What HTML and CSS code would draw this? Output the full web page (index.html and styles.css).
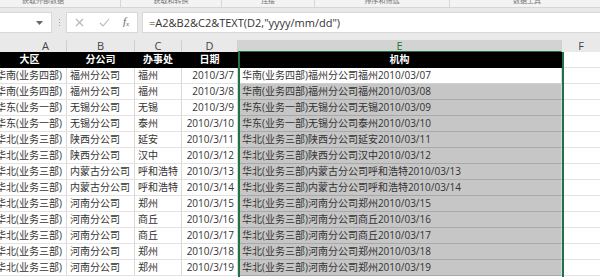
FILE: index.html
```html
<!DOCTYPE html>
<html lang="zh-CN">
<head>
<meta charset="utf-8">
<link rel="stylesheet" href="styles.css">
</head>
<body>
<div class="app">
  <div class="ribbon">
    <div class="grp g1"><span class="lbl">获取外部数据</span></div>
    <div class="grp g2"><span class="lbl">获取和转换</span></div>
    <div class="grp g3"><span class="lbl">连接</span></div>
    <div class="grp g4"><span class="lbl">排序和筛选</span></div>
    <div class="grp g5"><span class="lbl">数据工具</span></div>
  </div>
  <div class="fbar">
    <div class="namebox">
      <svg class="dd" width="7" height="4" viewBox="0 0 7 4"><path d="M0 0h7L3.5 4z" fill="#666"/></svg>
    </div>
    <div class="dots"><i></i><i></i><i></i></div>
    <div class="funcs">
      <svg width="9" height="9" viewBox="0 0 9 9"><path d="M1 1l7 7M8 1L1 8" stroke="#b5b5b5" stroke-width="1.1" fill="none"/></svg>
      <svg width="11" height="9" viewBox="0 0 11 9"><path d="M1 5l3 3 6-7" stroke="#b5b5b5" stroke-width="1.1" fill="none"/></svg>
      <span class="fx">f<sub>x</sub></span>
    </div>
    <div class="formula">=A2&amp;B2&amp;C2&amp;TEXT(D2,"yyyy/mm/dd")</div>
  </div>
  <div class="sheet">
    <div class="colhdr">
      <div class="ch cha">A</div>
      <div class="ch">B</div>
      <div class="ch">C</div>
      <div class="ch">D</div>
      <div class="ch che">E</div>
      <div class="ch chf">F</div>
    </div>
    <div class="row head">
      <div class="c ca">大区</div>
      <div class="c">分公司</div>
      <div class="c">办事处</div>
      <div class="c">日期</div>
      <div class="c">机构</div>
      <div class="c cf"></div>
    </div>
    <div class="row"><div class="c ca">华南(业务四部)</div><div class="c">福州分公司</div><div class="c">福州</div><div class="c cd">2010/3/7</div><div class="c ce active">华南(业务四部)福州分公司福州2010/03/07</div><div class="c cf"></div></div>
    <div class="row"><div class="c ca">华南(业务四部)</div><div class="c">福州分公司</div><div class="c">福州</div><div class="c cd">2010/3/8</div><div class="c ce">华南(业务四部)福州分公司福州2010/03/08</div><div class="c cf"></div></div>
    <div class="row"><div class="c ca">华东(业务一部)</div><div class="c">无锡分公司</div><div class="c">无锡</div><div class="c cd">2010/3/9</div><div class="c ce">华东(业务一部)无锡分公司无锡2010/03/09</div><div class="c cf"></div></div>
    <div class="row"><div class="c ca">华东(业务一部)</div><div class="c">无锡分公司</div><div class="c">泰州</div><div class="c cd">2010/3/10</div><div class="c ce">华东(业务一部)无锡分公司泰州2010/03/10</div><div class="c cf"></div></div>
    <div class="row"><div class="c ca">华北(业务三部)</div><div class="c">陕西分公司</div><div class="c">延安</div><div class="c cd">2010/3/11</div><div class="c ce">华北(业务三部)陕西分公司延安2010/03/11</div><div class="c cf"></div></div>
    <div class="row"><div class="c ca">华北(业务三部)</div><div class="c">陕西分公司</div><div class="c">汉中</div><div class="c cd">2010/3/12</div><div class="c ce">华北(业务三部)陕西分公司汉中2010/03/12</div><div class="c cf"></div></div>
    <div class="row"><div class="c ca">华北(业务三部)</div><div class="c">内蒙古分公司</div><div class="c">呼和浩特</div><div class="c cd">2010/3/13</div><div class="c ce">华北(业务三部)内蒙古分公司呼和浩特2010/03/13</div><div class="c cf"></div></div>
    <div class="row"><div class="c ca">华北(业务三部)</div><div class="c">内蒙古分公司</div><div class="c">呼和浩特</div><div class="c cd">2010/3/14</div><div class="c ce">华北(业务三部)内蒙古分公司呼和浩特2010/03/14</div><div class="c cf"></div></div>
    <div class="row"><div class="c ca">华北(业务三部)</div><div class="c">河南分公司</div><div class="c">郑州</div><div class="c cd">2010/3/15</div><div class="c ce">华北(业务三部)河南分公司郑州2010/03/15</div><div class="c cf"></div></div>
    <div class="row"><div class="c ca">华北(业务三部)</div><div class="c">河南分公司</div><div class="c">商丘</div><div class="c cd">2010/3/16</div><div class="c ce">华北(业务三部)河南分公司商丘2010/03/16</div><div class="c cf"></div></div>
    <div class="row"><div class="c ca">华北(业务三部)</div><div class="c">河南分公司</div><div class="c">商丘</div><div class="c cd">2010/3/17</div><div class="c ce">华北(业务三部)河南分公司商丘2010/03/17</div><div class="c cf"></div></div>
    <div class="row"><div class="c ca">华北(业务三部)</div><div class="c">河南分公司</div><div class="c">郑州</div><div class="c cd">2010/3/18</div><div class="c ce">华北(业务三部)河南分公司郑州2010/03/18</div><div class="c cf"></div></div>
    <div class="row"><div class="c ca">华北(业务三部)</div><div class="c">河南分公司</div><div class="c">郑州</div><div class="c cd">2010/3/19</div><div class="c ce">华北(业务三部)河南分公司郑州2010/03/19</div><div class="c cf"></div></div>
    <div class="selection"></div>
  </div>
</div>
</body>
</html>
```

FILE: styles.css
```css
html, body {
  margin: 0;
  padding: 0;
}
body {
  width: 600px;
  height: 277px;
  overflow: hidden;
  background: #e9e9e9;
  font-family: "Open Sans", "Noto Sans CJK SC", sans-serif;
  color: #333;
}
.app {
  display: flex;
  flex-direction: column;
  width: 600px;
  height: 277px;
}
.ribbon {
  display: flex;
  height: 7px;
  background: #f3f3f3;
  border-bottom: 1px solid #d6d6d6;
  overflow: hidden;
}
.grp {
  display: flex;
  justify-content: center;
  border-right: 1px solid #d6d6d6;
  box-sizing: border-box;
  overflow: hidden;
}
.g1 { width: 121px; justify-content: flex-start; padding-left: 22px; }
.g2 { width: 101px; }
.g3 { width: 93px; }
.g4 { width: 135px; }
.g5 { flex: 1; border-right: none; justify-content: flex-start; padding-left: 63px; }
.lbl {
  font-size: 7px;
  line-height: 10px;
  margin-top: -4px;
  color: #777;
  white-space: nowrap;
}
.fbar {
  display: flex;
  height: 21px;
  margin-top: 4px;
  align-items: stretch;
}
.namebox {
  width: 52px;
  background: #fff;
  border: 1px solid #d8d8d8;
  border-left: none;
  box-sizing: border-box;
  display: flex;
  align-items: center;
  padding-left: 36px;
}
.dots {
  width: 14px;
  display: flex;
  flex-direction: column;
  align-items: center;
  justify-content: center;
  gap: 2px;
}
.dots i {
  display: block;
  width: 1px;
  height: 1px;
  background: #a0a0a0;
}
.funcs {
  width: 72px;
  background: #fff;
  border: 1px solid #d8d8d8;
  box-sizing: border-box;
  display: flex;
  align-items: center;
  padding-left: 8px;
  gap: 15px;
}
.fx {
  font-family: "Liberation Serif", serif;
  font-style: italic;
  font-size: 11px;
  color: #666;
  margin-left: -2px;
  line-height: 10px;
}
.fx sub {
  font-size: 7px;
  vertical-align: -1px;
}
.formula {
  flex: 1;
  margin-left: 4px;
  background: #fff;
  border: 1px solid #d8d8d8;
  border-right: none;
  box-sizing: border-box;
  font-size: 11px;
  line-height: 19px;
  padding-left: 6px;
  color: #333;
  white-space: nowrap;
}
.sheet {
  position: relative;
  margin-top: 7px;
  flex: 1;
  background: #fff;
  overflow: hidden;
}
.colhdr {
  display: grid;
  grid-template-columns: 67px 68px 47px 56px 324px 38px;
  height: 12px;
  background: #e9e9e9;
}
.ch {
  font-size: 11px;
  line-height: 12px;
  text-align: center;
  color: #444;
  border-right: 1px solid #cfcfcf;
  box-sizing: border-box;
  font-family: "Open Sans", sans-serif;
}
.cha { padding-left: 25px; }
.che {
  background: #d3d3d3;
  color: #217346;
  border-bottom: 2px solid #217346;
  line-height: 11px;
}
.chf { border-right: none; }
.row {
  display: grid;
  grid-template-columns: 67px 68px 47px 56px 324px 38px;
  height: 16px;
}
.c {
  box-sizing: border-box;
  border-right: 1px solid #d9d9d9;
  border-bottom: 1px solid #e2e2e2;
  font-size: 10px;
  line-height: 15px;
  padding-left: 3px;
  white-space: nowrap;
  overflow: hidden;
  color: #333;
}
.ca {
  padding-left: 0;
  text-indent: -4px;
}
.cd {
  text-align: right;
  padding-left: 0;
  padding-right: 3px;
}
.ce {
  background: #c6c6c6;
  border-bottom-color: #a9a9a9;
  padding-left: 4px;
}
.ce.active {
  background: #fff;
  border-bottom-color: #d0d0d0;
}
.cf { border-right: none; }
.head .c {
  background: #000;
  color: #fff;
  font-weight: 700;
  text-align: center;
  padding: 0;
  border-color: #000;
  text-indent: 0;
}
.head .ca { padding-right: 7px; }
.head .cf {
  background: #fff;
  border-bottom-color: #e2e2e2;
}
.selection {
  position: absolute;
  left: 238px;
  top: 12px;
  width: 326px;
  height: 300px;
  border-left: 2px solid #217346;
  border-right: 2px solid #217346;
  box-sizing: border-box;
  pointer-events: none;
}
```
